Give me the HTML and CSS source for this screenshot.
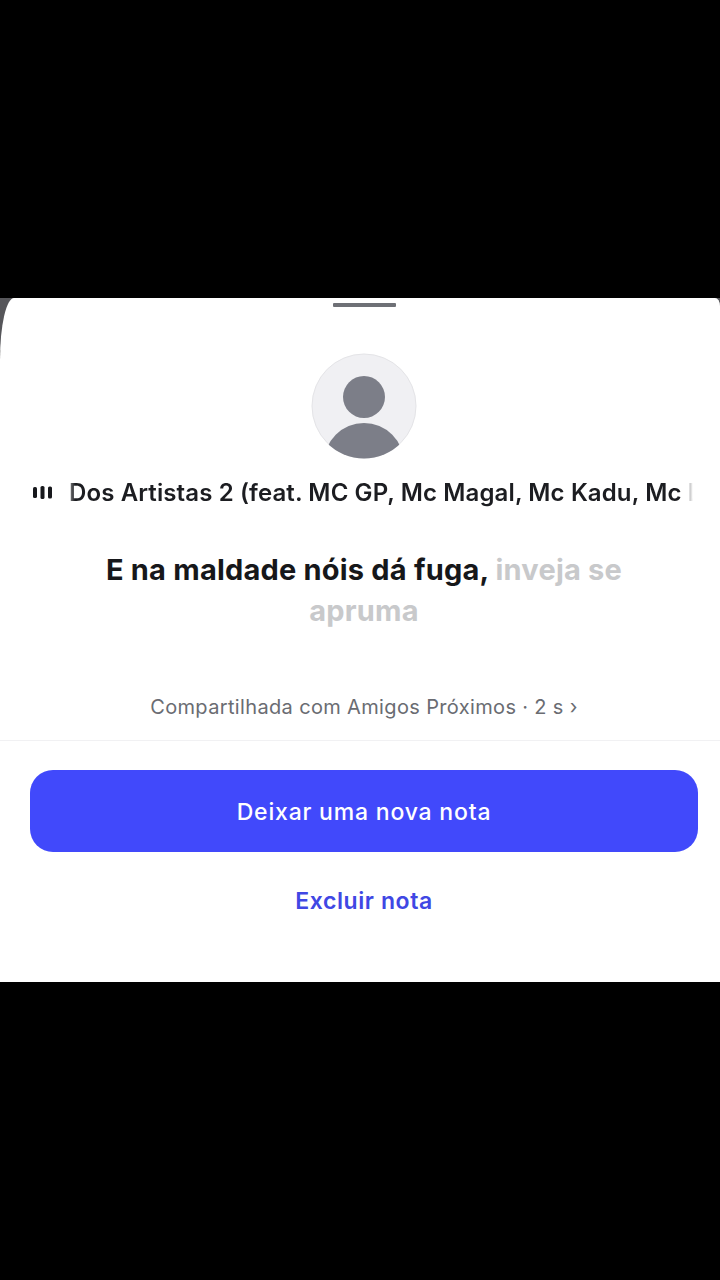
FILE: index.html
```html
<!DOCTYPE html>
<html lang="pt-BR">
<head>
<meta charset="utf-8">
<title>Nota</title>
<link rel="stylesheet" href="styles.css">
</head>
<body>
<main class="backdrop">
  <section class="sheet">
    <div class="top">
      <div class="handle"></div>
      <svg class="avatar" width="106" height="106" viewBox="0 0 106 106" aria-hidden="true">
        <defs><clipPath id="c"><circle cx="53" cy="53" r="52.5"/></clipPath></defs>
        <circle cx="53" cy="53" r="52" fill="#f0f0f3" stroke="#e4e4e7" stroke-width="1"/>
        <circle cx="53" cy="44" r="21" fill="#7c7e88"/>
        <circle cx="53" cy="110" r="40" fill="#7c7e88" clip-path="url(#c)"/>
      </svg>
      <div class="track">
        <svg class="bars" width="19" height="13" viewBox="0 0 19 13" aria-hidden="true">
          <rect x="0" y="1" width="4" height="11" rx="1.6"/>
          <rect x="7.5" y="0" width="4" height="13" rx="1.6"/>
          <rect x="15" y="0.5" width="4" height="12" rx="1.6"/>
        </svg>
        <div class="track-name"><span>Dos Artistas 2 (feat. MC GP, Mc Magal, Mc Kadu, Mc Lipi, Mc Luuky)</span></div>
      </div>
      <p class="lyric"><b>E na maldade nóis dá fuga,</b> <span>inveja se apruma</span></p>
      <p class="meta">Compartilhada com Amigos Próximos · 2 s ›</p>
    </div>
    <div class="actions">
      <button class="primary">Deixar uma nova nota</button>
      <button class="link">Excluir nota</button>
    </div>
  </section>
</main>
</body>
</html>
```
FILE: styles.css
```css
* { box-sizing: border-box; }
html, body { margin: 0; height: 100%; background: #000; }
body { font-family: Inter, "Liberation Sans", sans-serif; overflow: hidden; }
.backdrop {
  padding-top: 298px;
  background: linear-gradient(#000 298px, #56565a 298px, #56565a 350px, #000 350px);
}
.sheet {
  height: 684px;
  background: #fff;
  display: flex;
  flex-direction: column;
  border-top-left-radius: 14px 62px;
  border-top-right-radius: 5px 8px;
}
.top {
  display: flex;
  flex-direction: column;
  align-items: center;
  padding-left: 8px;
}
.handle { width: 63px; height: 4px; margin-top: 5px; background: #6e7076; border-radius: 1px; }
.avatar { display: block; margin-top: 46px; }
.track {
  align-self: stretch;
  display: flex;
  align-items: center;
  margin-top: 19px;
  padding-left: 25px;
  height: 28px;
}
.bars { fill: #17181c; flex: none; }
.track-name {
  margin-left: 17px;
  width: 626px;
  overflow: hidden;
  white-space: nowrap;
  font-size: 24px;
  font-weight: 600;
  letter-spacing: .12px;
  color: #1c1d21;
  -webkit-mask-image: linear-gradient(90deg, rgba(0,0,0,.5) 0, #000 6px, #000 612px, transparent 624px);
  mask-image: linear-gradient(90deg, rgba(0,0,0,.5) 0, #000 6px, #000 612px, transparent 624px);
}
.lyric {
  margin: 43px 0 0;
  width: 560px;
  text-align: center;
  font-size: 29px;
  line-height: 41px;
  font-weight: 700;
  letter-spacing: .2px;
  color: #c8c9cb;
}
.lyric b { color: #16171a; font-weight: 700; }
.meta {
  margin: 64px 0 0;
  height: 45px;
  font-size: 20px;
  line-height: 24px;
  color: #6a6c72;
  letter-spacing: .35px;
}
.actions {
  border-top: 1px solid #f1f1f3;
  padding: 29px 22px 0 30px;
  display: flex;
  flex-direction: column;
}
button { font-family: inherit; border: 0; background: none; padding: 0; }
.primary {
  height: 82px;
  padding-top: 2px;
  background: #4149fb;
  border-radius: 23px;
  color: #fff;
  font-size: 23px;
  font-weight: 500;
  letter-spacing: .8px;
}
.link {
  margin-top: 32px;
  height: 34px;
  color: #4047e4;
  font-size: 23px;
  font-weight: 600;
  letter-spacing: .6px;
}
```
